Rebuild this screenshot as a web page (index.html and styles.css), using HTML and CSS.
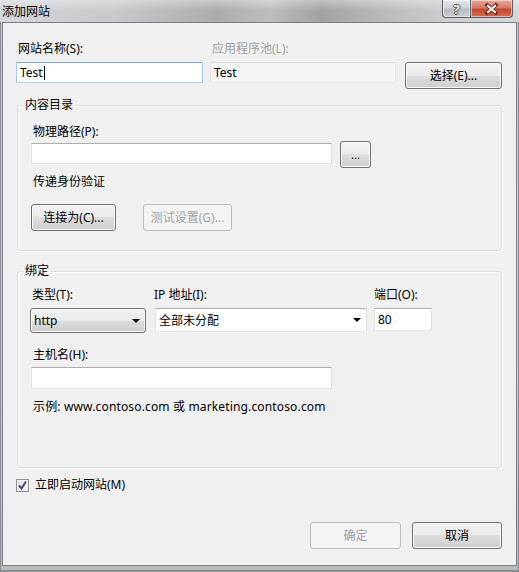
FILE: index.html
```html
<!DOCTYPE html>
<html lang="zh-CN">
<head>
  <meta charset="UTF-8">
  <title>添加网站</title>
  <link rel="stylesheet" href="styles.css">
</head>
<body>
<div class="window">

  <!-- Caption bar -->
  <div class="titlebar">
    <span class="title">添加网站</span>
    <div class="caption-buttons">
      <span class="cap cap-help">?</span>
      <span class="cap cap-close">
        <svg width="43" height="18" viewBox="0 0 43 18">
          <path d="M17 5 L26 13 M26 5 L17 13" stroke="#6b2b1f" stroke-width="4" stroke-linecap="square"/>
          <path d="M17 5 L26 13 M26 5 L17 13" stroke="#fff" stroke-width="2"/>
        </svg>
      </span>
    </div>
  </div>

  <div class="client">

    <!-- Site name / app pool -->
    <div class="site-row">
      <div class="col col-name">
        <div class="field-label">网站名称(S):</div>
        <div class="textbox focused">Test<span class="caret"></span></div>
      </div>
      <div class="col col-pool">
        <div class="field-label disabled">应用程序池(L):</div>
        <div class="textbox readonly">Test</div>
      </div>
      <button class="btn btn-select">选择(E)...</button>
    </div>

    <!-- Content directory -->
    <fieldset class="group group-content">
      <legend>内容目录</legend>
      <div class="field-label">物理路径(P):</div>
      <div class="path-row">
        <div class="textbox path-box"></div>
        <button class="btn btn-browse">...</button>
      </div>
      <div class="field-label auth-label">传递身份验证</div>
      <div class="auth-buttons">
        <button class="btn btn-connect">连接为(C)...</button>
        <button class="btn btn-test disabled">测试设置(G)...</button>
      </div>
    </fieldset>

    <!-- Binding -->
    <fieldset class="group group-binding">
      <legend>绑定</legend>
      <div class="bind-row">
        <div class="col col-type">
          <div class="field-label">类型(T):</div>
          <div class="combo combo-list">http<span class="arrow"></span></div>
        </div>
        <div class="col col-ip">
          <div class="field-label">IP 地址(I):</div>
          <div class="combo combo-edit">全部未分配<span class="arrow"></span></div>
        </div>
        <div class="col col-port">
          <div class="field-label">端口(O):</div>
          <div class="textbox port-box">80</div>
        </div>
      </div>
      <div class="field-label host-label">主机名(H):</div>
      <div class="textbox host-box"></div>
      <div class="field-label example">示例: www.contoso.com 或 marketing.contoso.com</div>
    </fieldset>

    <label class="check-row">
      <span class="checkbox">
        <svg width="11" height="11" viewBox="0 0 11 11">
          <path d="M2 5.5 L4.5 8.5 L9 1.5" fill="none" stroke="#3b4e88" stroke-width="2"/>
        </svg>
      </span>
      立即启动网站(M)
    </label>

    <div class="footer">
      <button class="btn btn-ok disabled">确定</button>
      <button class="btn btn-cancel">取消</button>
    </div>

  </div>
</div>
</body>
</html>
```

FILE: styles.css
```css
* {
  box-sizing: border-box;
}

body {
  margin: 0;
  background-color: #c9cbce;
  font-family: "Noto Sans", "Noto Sans CJK SC", sans-serif;
  font-size: 12px;
  color: #000;
}

/* Window frame */
.window {
  width: 519px;
  height: 572px;
  display: flex;
  flex-direction: column;
  padding: 0 2px 6px 2px;
  background: linear-gradient(180deg, #c6c9cd 0%, #cfd1d4 60%, #b9bcbf 100%);
  box-shadow: inset 1px 0 0 #8a8d91, inset -1px 0 0 #8a8d91, inset 0 -2px 0 #8a8d91;
}

.titlebar {
  height: 22px;
  flex: none;
  display: flex;
  align-items: flex-start;
  margin: 0 -2px;
  padding-left: 2px;
  background:
    linear-gradient(180deg, rgba(255, 255, 255, 0.35) 0%, rgba(255, 255, 255, 0) 50%),
    linear-gradient(90deg, #d3d6da 0%, #c7c9cc 22%, #a9abad 42%, #bcbdbe 52%, #9fa1a3 62%, #b9babb 74%, #cfd0d1 88%, #d6d7d8 100%);
}

.title {
  padding-top: 4px;
  line-height: 16px;
}

.caption-buttons {
  margin-left: auto;
  margin-right: 6px;
  display: flex;
}

.cap {
  height: 18px;
  display: flex;
  align-items: center;
  justify-content: center;
  border: 1px solid #585d66;
  border-top: none;
  box-shadow: inset 0 0 0 1px rgba(255, 255, 255, 0.5);
}

.cap-help {
  width: 28px;
  border-right: none;
  border-bottom-left-radius: 4px;
  background: linear-gradient(180deg, #e4e6e9 0%, #cfd2d6 48%, #b7bbc0 52%, #c9ccd0 100%);
  color: #fff;
  font-weight: bold;
  font-size: 13px;
  text-shadow: 1px 0 0 #4b4f55, -1px 0 0 #4b4f55, 0 1px 0 #4b4f55, 0 -1px 0 #4b4f55;
}

.cap-close {
  width: 43px;
  border-bottom-right-radius: 4px;
  background: linear-gradient(180deg, #e7a899 0%, #d67a66 46%, #c4472e 54%, #d46d55 100%);
}

/* Client area */
.client {
  flex: 1;
  display: flex;
  flex-direction: column;
  padding: 18px 14px 16px 13px;
  background-color: #f0f0f0;
  border: 1px solid #7a7e84;
}

.field-label {
  line-height: 16px;
  padding-left: 2px;
}

.field-label.disabled {
  color: #a0a0a0;
}

.site-row {
  display: flex;
  align-items: flex-start;
}

.site-row .field-label {
  margin-bottom: 5px;
}

.col-name {
  width: 187px;
}

.col-pool {
  width: 186px;
  margin-left: 7px;
}

.btn-select {
  width: 97px;
  height: 26px;
  margin-left: 9px;
  margin-top: 21px;
}

/* Text boxes */
.textbox {
  height: 21px;
  display: flex;
  align-items: center;
  padding-left: 3px;
  background-color: #fff;
  border: 1px solid;
  border-color: #abadb3 #dbdfe6 #e3e9ef #e2e3ea;
}

.textbox.focused {
  border-color: #82a9d3 #a9cbeb #b5d3ee #a9cbeb;
}

.textbox.readonly {
  background-color: #f4f4f4;
  border-color: #d8dadd #e3e5e8 #e8eaec #e3e5e8;
}

.caret {
  width: 1px;
  height: 14px;
  margin-left: 1px;
  background-color: #000;
}

/* Buttons */
.btn {
  height: 27px;
  padding: 0;
  display: flex;
  align-items: center;
  justify-content: center;
  font: inherit;
  line-height: 16px;
  color: #000;
  border: 1px solid #707070;
  border-radius: 3px;
  background: linear-gradient(180deg, #f2f2f2 0%, #ebebeb 50%, #dddddd 50%, #cfcfcf 100%);
  box-shadow: inset 0 0 0 1px #fbfbfb;
}

.btn.disabled {
  color: #a0a0a0;
  border-color: #bcbfc2;
  background: #f4f4f4;
  box-shadow: none;
}

/* Group boxes */
.group {
  margin: 0 0 0 1px;
  min-width: 0;
  border: 1px solid #d5dbe0;
  border-radius: 3px;
  box-shadow: 1px 1px 0 #fff, inset 1px 1px 0 #fff;
}

.group legend {
  padding: 0 2px;
  margin-left: -8px;
  line-height: 16px;
}

.group-content {
  margin-top: 8px;
  padding: 11px 13px 19px 13px;
}

.group-content > .field-label:first-of-type {
  margin-bottom: 1px;
}

.path-row {
  display: flex;
  align-items: flex-start;
}

.path-box {
  width: 301px;
  margin-top: 2px;
}

.btn-browse {
  width: 31px;
  margin-left: 8px;
  font-size: 11px;
}

.auth-label {
  margin-top: 6px;
}

.auth-buttons {
  display: flex;
  margin-top: 14px;
}

.btn-connect {
  width: 85px;
}

.btn-test {
  width: 89px;
  margin-left: 27px;
}

.group-binding {
  margin-top: 12px;
  padding: 8px 13px 52px 13px;
}

.bind-row {
  display: flex;
  align-items: flex-start;
}

.bind-row .field-label {
  margin-bottom: 5px;
}

.col-type {
  width: 116px;
  margin-left: -1px;
}

.col-ip {
  width: 212px;
  margin-left: 9px;
}

.col-ip .field-label {
  padding-left: 0;
  margin-left: -1px;
}

.col-port {
  width: 58px;
  margin-left: 7px;
}

.col-port .field-label {
  padding-left: 0;
}

/* Combo boxes */
.combo {
  display: flex;
  align-items: center;
  padding-left: 3px;
}

.combo-list {
  height: 25px;
  border: 1px solid #707070;
  border-radius: 3px;
  background: linear-gradient(180deg, #f2f2f2 0%, #ebebeb 50%, #dddddd 50%, #cfcfcf 100%);
  box-shadow: inset 0 0 0 1px #fbfbfb;
}

.combo-edit {
  height: 24px;
  background-color: #fff;
  border: 1px solid;
  border-color: #abadb3 #dbdfe6 #e3e9ef #e2e3ea;
}

.arrow {
  margin-left: auto;
  margin-right: 5px;
  width: 0;
  height: 0;
  border-left: 4px solid transparent;
  border-right: 4px solid transparent;
  border-top: 4px solid #000;
}

.port-box {
  height: 23px;
}

.host-label {
  margin-top: 14px;
}

.host-box {
  width: 301px;
  height: 22px;
  margin-top: 4px;
}

.example {
  margin-top: 10px;
  letter-spacing: 0.15px;
}

/* Checkbox */
.check-row {
  margin-top: 9px;
  display: flex;
  align-items: center;
  line-height: 16px;
}

.checkbox {
  width: 13px;
  height: 13px;
  margin-right: 6px;
  display: flex;
  align-items: center;
  justify-content: center;
  border: 1px solid #8f8f8f;
  background: linear-gradient(135deg, #dcdcdc 0%, #f7f7f7 100%);
  box-shadow: inset 0 0 0 1px #f4f4f4;
}

/* Dialog buttons */
.footer {
  margin-top: auto;
  display: flex;
  justify-content: flex-end;
}

.btn-ok {
  width: 91px;
}

.btn-cancel {
  width: 90px;
  margin-left: 11px;
}
```
